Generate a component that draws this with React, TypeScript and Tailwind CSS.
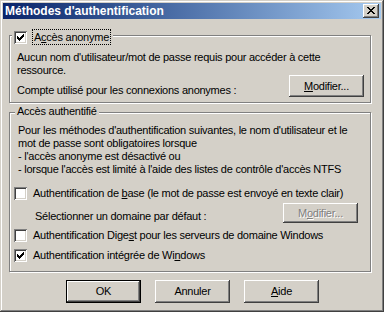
import React from "react";

const bevel =
  "shadow-[inset_-1px_-1px_#404040,inset_1px_1px_#ffffff,inset_-2px_-2px_#808080,inset_2px_2px_#d4d0c8]";

const CheckMark = () => (
  <svg width="7" height="7" viewBox="0 0 7 7" shapeRendering="crispEdges" className="absolute left-[3px] top-[3px]">
    <rect x="0" y="2" width="1" height="3" fill="#000" />
    <rect x="1" y="3" width="1" height="3" fill="#000" />
    <rect x="2" y="4" width="1" height="3" fill="#000" />
    <rect x="3" y="3" width="1" height="3" fill="#000" />
    <rect x="4" y="2" width="1" height="3" fill="#000" />
    <rect x="5" y="1" width="1" height="3" fill="#000" />
    <rect x="6" y="0" width="1" height="3" fill="#000" />
  </svg>
);

const Checkbox = ({ checked }: { checked?: boolean }) => (
  <div className="relative w-[13px] h-[13px] shrink-0 bg-white shadow-[inset_1px_1px_#808080,inset_-1px_-1px_#ffffff,inset_2px_2px_#404040,inset_-2px_-2px_#d4d0c8]">
    {checked && <CheckMark />}
  </div>
);

const Button = ({
  children,
  isDefault,
  disabled,
  className = "",
}: {
  children: React.ReactNode;
  isDefault?: boolean;
  disabled?: boolean;
  className?: string;
}) => (
  <div
    className={
      "flex shrink-0 items-center justify-center bg-[#d4d0c8] " +
      (isDefault ? "border border-black " : "") +
      className
    }
  >
    <div className={"w-full h-full flex items-center justify-center " + bevel}>
      <span
        className={
          disabled
            ? "text-[#808080] [text-shadow:1px_1px_0_#ffffff]"
            : "text-black"
        }
      >
        {children}
      </span>
    </div>
  </div>
);

export default function App() {
  return (
    <div className="w-[384px] h-[312px] overflow-hidden bg-[#d4d0c8] p-[3px] flex flex-col font-['Liberation_Sans',Arial,sans-serif] text-[11px] leading-[13px] tracking-[-0.25px] whitespace-nowrap text-black shadow-[inset_-1px_-1px_#404040,inset_1px_1px_#d4d0c8,inset_-2px_-2px_#808080,inset_2px_2px_#ffffff]">
      {/* title bar */}
      <div className="h-[16px] shrink-0 flex items-center justify-between pl-[2px] pr-[2px] bg-linear-to-r from-[#0a246a] to-[#a6caf0]">
        <span className="text-white font-bold text-[12px] tracking-normal">Méthodes d'authentification</span>
        <div className={"w-[16px] h-[14px] relative bg-[#d4d0c8] " + bevel}>
          <svg width="8" height="7" viewBox="0 0 8 7" shapeRendering="crispEdges" className="absolute left-[4px] top-[3px]">
            <path
              fill="#000"
              d="M0 0h2v1H0zM6 0h2v1H6zM1 1h2v1H1zM5 1h2v1H5zM2 2h4v1H2zM3 3h2v1H3zM2 4h4v1H2zM1 5h2v1H1zM5 5h2v1H5zM0 6h2v1H0zM6 6h2v1H6z"
            />
          </svg>
        </div>
      </div>

      {/* group 1 */}
      <div className="relative shrink-0 mt-[16px] ml-[6px] w-[362px] border border-[#808080] shadow-[inset_1px_1px_#ffffff,1px_1px_#ffffff] pt-[15px] pl-[7px] pr-[6px] pb-[5px]">
        <div className="absolute top-[-7px] left-[2px] flex items-center bg-[#d4d0c8] px-[2px]">
          <Checkbox checked />
          <div className="ml-[5px] h-[16px] flex items-center pl-[1px] pr-[1px] border border-dotted border-black">
            A<span className="underline">c</span>cès anonyme
          </div>
        </div>
        <p>
          Aucun nom d'utilisateur/mot de passe requis pour accéder à cette
          <br />
          ressource.
        </p>
        <div className="mt-[-2px] flex items-end justify-between">
          <span>Compte utilisé pour les connexions anonymes :</span>
          <Button className="w-[75px] h-[22px]">
            <span className="underline">M</span>odifier...
          </Button>
        </div>
      </div>

      {/* group 2 */}
      <div className="relative shrink-0 mt-[9px] ml-[6px] w-[362px] border border-[#808080] shadow-[inset_1px_1px_#ffffff,1px_1px_#ffffff] pt-[11px] pl-[4px] pr-[12px] pb-[9px]">
        <div className="absolute top-[-8px] left-[5px] bg-[#d4d0c8] px-[2px]">Accès authentifié</div>
        <p className="ml-[4px]">
          Pour les méthodes d'authentification suivantes, le nom d'utilisateur et le
          <br />
          mot de passe sont obligatoires lorsque
          <br />
          - l'accès anonyme est désactivé ou
          <br />
          - lorsque l'accès est limité à l'aide des listes de contrôle d'accès NTFS
        </p>
        <div className="mt-[11px] flex items-center">
          <Checkbox />
          <span className="ml-[6px]">
            Authentification de <span className="underline">b</span>ase (le mot de passe est envoyé en texte clair)
          </span>
        </div>
        <div className="mt-[3px] flex items-end justify-between">
          <span className="ml-[21px]">Sélectionner un domaine par défaut :</span>
          <Button disabled className="w-[75px] h-[20px]">
            M<span className="underline">o</span>difier...
          </Button>
        </div>
        <div className="mt-[6px] flex items-center">
          <Checkbox />
          <span className="ml-[6px]">
            Authentification Dige<span className="underline">s</span>t pour les serveurs de domaine Windows
          </span>
        </div>
        <div className="mt-[7px] flex items-center">
          <Checkbox checked />
          <span className="ml-[6px]">
            Authentification intégrée de Wi<span className="underline">n</span>dows
          </span>
        </div>
      </div>

      {/* buttons */}
      <div className="mt-[8px] ml-[63px] flex gap-[14px]">
        <Button isDefault className="w-[75px] h-[23px]">
          OK
        </Button>
        <Button className="w-[75px] h-[23px]">Annuler</Button>
        <Button className="w-[75px] h-[23px]">
          <span className="underline">A</span>ide
        </Button>
      </div>
    </div>
  );
}
